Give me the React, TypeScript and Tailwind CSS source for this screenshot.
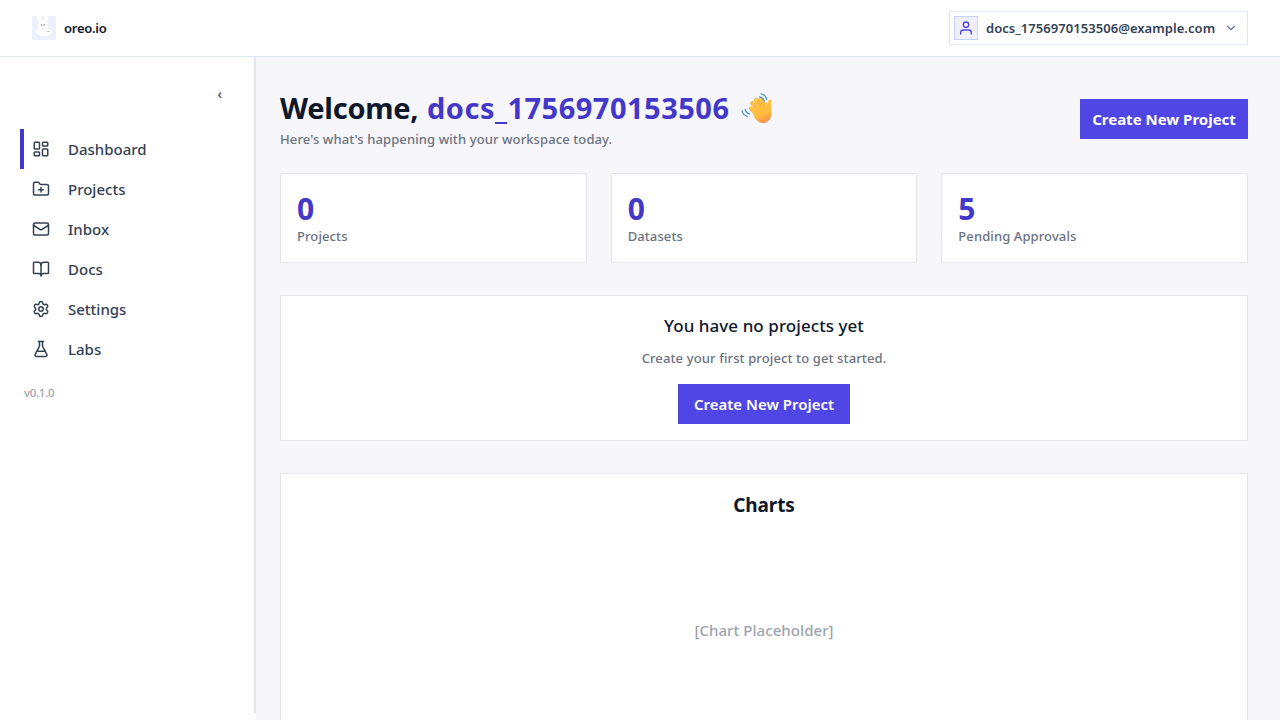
import { BookOpen, ChevronDown, FlaskConical, FolderPlus, LayoutDashboard, Mail, Settings } from "lucide-react";

const nav = [
  { label: "Dashboard", icon: LayoutDashboard, active: true },
  { label: "Projects", icon: FolderPlus },
  { label: "Inbox", icon: Mail },
  { label: "Docs", icon: BookOpen },
  { label: "Settings", icon: Settings },
  { label: "Labs", icon: FlaskConical },
];

const stats = [
  { value: 0, label: "Projects" },
  { value: 0, label: "Datasets" },
  { value: 5, label: "Pending Approvals" },
];

function Logo() {
  return (
    <svg width="24" height="24" viewBox="0 0 24 24">
      <rect width="24" height="24" rx="1.5" fill="#edf1fe" />
      <g fill="#fff">
        <ellipse cx="7.4" cy="2.5" rx="2" ry="5" transform="rotate(-12 7.4 2.5)" />
        <ellipse cx="14" cy="2.5" rx="2" ry="5" transform="rotate(8 14 2.5)" />
        <ellipse cx="11" cy="9.5" rx="5.2" ry="4.8" />
        <ellipse cx="11.7" cy="15.7" rx="7.8" ry="4.5" />
      </g>
      <g fill="#8b8d99">
        <rect x="9" y="8.2" width="1.2" height="1.6" />
        <rect x="11.6" y="8.2" width="1.2" height="1.6" />
        <rect x="15" y="15" width="3" height="0.8" opacity="0.6" />
      </g>
      <rect x="9.6" y="11.8" width="2.2" height="1.3" rx="0.6" fill="#fce5cf" />
    </svg>
  );
}

function UserIcon() {
  return (
    <svg width="16" height="16" viewBox="0 0 24 24" fill="none" stroke="#4f46e5" strokeWidth="2" strokeLinecap="round" strokeLinejoin="round">
      <path d="M20 21v-2a4 4 0 0 0-4-4H8a4 4 0 0 0-4 4v2" />
      <circle cx="12" cy="7" r="4" />
    </svg>
  );
}

function WavingHand() {
  return (
    <svg className="ml-px mt-1" width="32" height="32" viewBox="0 0 32 32" fill="none" strokeLinecap="round">
      <defs>
        <linearGradient id="hand" x1="14" y1="6" x2="23" y2="30" gradientUnits="userSpaceOnUse">
          <stop offset="0" stopColor="#ffc843" />
          <stop offset="0.65" stopColor="#ffbc3c" />
          <stop offset="1" stopColor="#f58f55" />
        </linearGradient>
      </defs>
      <g stroke="#e8973a" strokeWidth="4">
        <path d="M10 15.5l9 8M11.4 10.2l9 10M15 7l8 11M19.6 6.4l6 10" />
      </g>
      <g stroke="url(#hand)" strokeWidth="3.5">
        <path d="M10 15.5l9 8" />
        <path d="M11.4 10.2l9 10" />
        <path d="M15 7l8 11" />
        <path d="M19.6 6.4l6 10" />
        <path d="M29 8.400c-1.600 3-.8 6-.5 11" />
      </g>
      <path d="M10.5 17l7-7 7.500-1 1.800 3.500 3-1 .6 8.500c.3 6-3.600 10-8.900 10-3.700 0-5.800-2.600-8.500-6.200z" fill="url(#hand)" />
      <path d="M13.300 12.500l3.500 4M16.700 9.300l3.700 5M20.800 9.200l2.700 4.500" stroke="#e99a38" strokeWidth="0.7" />
      <g stroke="#3f8fd6" strokeWidth="1.2">
        <path d="M18.600 3.800c2.400.4 4 1.900 4.700 4.300M20 .9c3 .6 5 2.700 5.600 5.700" />
        <path d="M4.200 16.300c.6 2.400 2.100 4 4.500 4.700M1 17.500c.6 3 2.600 5.200 5.700 6" />
      </g>
    </svg>
  );
}

export default function App() {
  return (
    <div className="flex h-[720px] w-full flex-col overflow-hidden bg-[#f7f6fb] [font-family:'Noto_Sans','Open_Sans',sans-serif] font-medium text-[#0f172a]">
      <header className="flex h-[57px] shrink-0 items-center justify-between border-b border-[#e2e8f0] bg-white px-8">
        <div className="flex items-center gap-2">
          <Logo />
          <span className="pt-px text-[13px] font-semibold tracking-[-0.25px]">oreo.io</span>
        </div>
        <button className="flex h-[34px] w-[299px] items-center border border-[#e2e8f0] bg-white pl-1 text-[#334155]">
          <span className="flex h-6 w-6 items-center justify-center border border-[#c7d2fe] bg-[#f0effc]">
            <UserIcon />
          </span>
          <span className="ml-2 w-[238px] pt-px text-left text-[13px] font-semibold tracking-[0.05px]">docs_1756970153506@example.com</span>
          <ChevronDown size={14} className="text-[#64748b]" />
        </button>
      </header>

      <div className="flex min-h-0 flex-1">
        <div className="w-64 shrink-0 bg-white">
          <aside className="h-[656px] border-r-2 border-[#e5e5ee]">
            <div className="flex h-[72px] justify-end pr-8 pt-[27px]">
              <button className="h-5 text-[14px] leading-5 text-[#475569]">‹</button>
            </div>
            <nav className="pl-5">
              {nav.map(({ label, icon: Icon, active }) => (
                <a key={label} className={`flex h-10 items-center border-l-4 pl-2 ${active ? "border-[#4338ca]" : "border-transparent"}`}>
                  <Icon size={18} strokeWidth={2} className="text-[#334155]" />
                  <span className="ml-[18px] pt-px text-[15px] text-[#334155]">{label}</span>
                </a>
              ))}
            </nav>
            <div className="mt-4 pl-6 text-[11.5px] leading-4 tracking-[-0.3px] text-[#9ca3af]">v0.1.0</div>
          </aside>
        </div>

        <main className="min-w-0 flex-1 overflow-hidden pl-6 pr-8 pt-8">
          <div className="flex items-center justify-between">
            <div>
              <h1 className="flex h-9 items-center whitespace-pre text-[29px] font-bold leading-9">
                <span className="w-[147px] pt-0.5 tracking-[-0.25px]">Welcome,</span>
                <span className="w-[313px] pt-0.5 tracking-[0.5px] text-[#4338ca]">docs_1756970153506</span>
                <WavingHand />
              </h1>
              <p className="mt-1 text-[13px] leading-5 tracking-[0.1px] text-[#6b7280]">Here's what's happening with your workspace today.</p>
            </div>
            <button className="h-10 w-[168px] whitespace-nowrap bg-[#4f46e5] pt-px text-[15px] font-bold text-white">Create New Project</button>
          </div>

          <div className="mt-6 grid grid-cols-3 gap-6">
            {stats.map(({ value, label }) => (
              <div key={label} className="border border-[#e5e5ea] bg-white p-4">
                <div className="h-9 pt-px text-[30px] font-bold leading-9 text-[#4338ca]">{value}</div>
                <div className="text-[13px] leading-5 tracking-[0.1px] text-[#6b7280]">{label}</div>
              </div>
            ))}
          </div>

          <section className="mt-8 flex flex-col items-center border border-[#e5e5ea] bg-white p-4">
            <h2 className="text-[17px] leading-7 tracking-[0.06px]">You have no projects yet</h2>
            <p className="mt-2 text-[13px] leading-5 tracking-[0.12px] text-[#6b7280]">Create your first project to get started.</p>
            <button className="mt-4 h-10 w-[172px] whitespace-nowrap bg-[#4f46e5] pt-px text-[15px] font-semibold text-white">Create New Project</button>
          </section>

          <section className="mt-8 border border-[#e5e5ea] bg-white p-4 text-center">
            <h2 className="h-7 pt-px text-[19px] font-bold leading-7 tracking-[-0.1px]">Charts</h2>
            <div className="mt-4 flex h-48 items-center justify-center text-[15px] tracking-[0.06px] text-[#9ca3af]">[Chart Placeholder]</div>
          </section>
        </main>
      </div>
    </div>
  );
}
